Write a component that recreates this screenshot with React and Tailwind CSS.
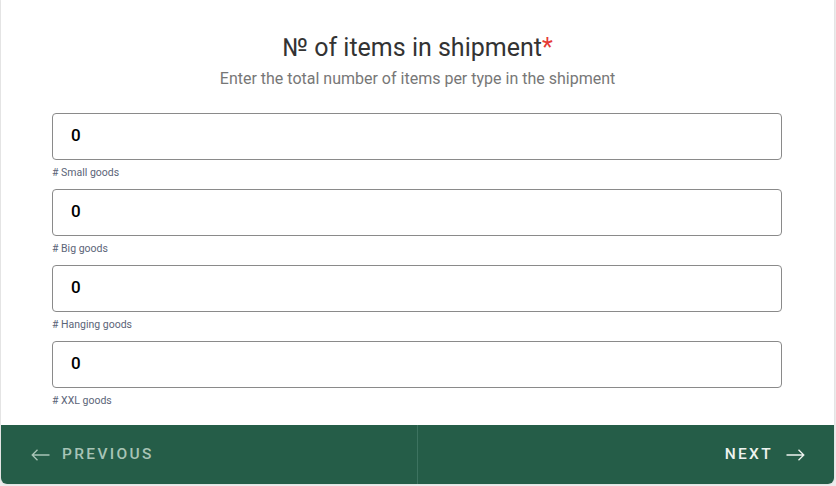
import React from "react";

const fields = ["Small goods", "Big goods", "Hanging goods", "XXL goods"];

const ArrowLeft = () => (
  <svg width="19" height="12" viewBox="0 0 19 12" fill="none" stroke="currentColor" strokeWidth="1.3">
    <path d="M18.5 6H1.2M6.5 0.8L1.2 6l5.3 5.2" />
  </svg>
);

const ArrowRight = () => (
  <svg width="19" height="12" viewBox="0 0 19 12" fill="none" stroke="currentColor" strokeWidth="1.3">
    <path d="M0.5 6h17.3M12.5 0.8l5.3 5.2-5.3 5.2" />
  </svg>
);

const App = () => {
  return (
    <div className="min-h-[486px] w-[836px] bg-[#ececec] font-['Roboto',sans-serif]">
      <div className="ml-[1px] flex h-[484px] w-[833px] flex-col rounded-b-[6px] bg-white shadow-[0_0_2px_rgba(0,0,0,0.12)]">
        <div className="flex flex-1 flex-col items-center pt-[33px]">
          <h2 className="text-[25px] leading-[30px] font-normal text-[#333]">
            № of items in shipment<span className="text-[#e53935]">*</span>
          </h2>
          <p className="mt-[5px] text-[16px] leading-[21px] text-[#777]">
            Enter the total number of items per type in the shipment
          </p>
          <form className="mt-[24px] flex w-[730px] flex-col gap-[9px] self-start ml-[51px]">
            {fields.map((f) => (
              <div key={f}>
                <input
                  type="text"
                  defaultValue="0"
                  className="h-[47px] w-full rounded-[4px] border border-[#8a8a8a] bg-white px-[18px] pb-[3px] text-[17px] font-medium text-black outline-none"
                />
                <div className="mt-[6px] text-[10.5px] leading-[14px] text-[#5b6478]">
                  # {f}
                </div>
              </div>
            ))}
          </form>
        </div>
        <div className="flex h-[59px] overflow-hidden rounded-b-[6px] bg-[#255d48]">
          <button className="flex w-[417px] items-center gap-[12px] border-r border-[#3d7360] pl-[30px] text-[15.5px] font-medium tracking-[0.15em] text-[#a8c4b6]">
            <ArrowLeft />
            PREVIOUS
          </button>
          <button className="flex flex-1 items-center justify-end gap-[13px] pr-[29px] text-[15.5px] font-medium tracking-[0.15em] text-[#eef3ef]">
            NEXT
            <ArrowRight />
          </button>
        </div>
      </div>
    </div>
  );
};

export default App;
